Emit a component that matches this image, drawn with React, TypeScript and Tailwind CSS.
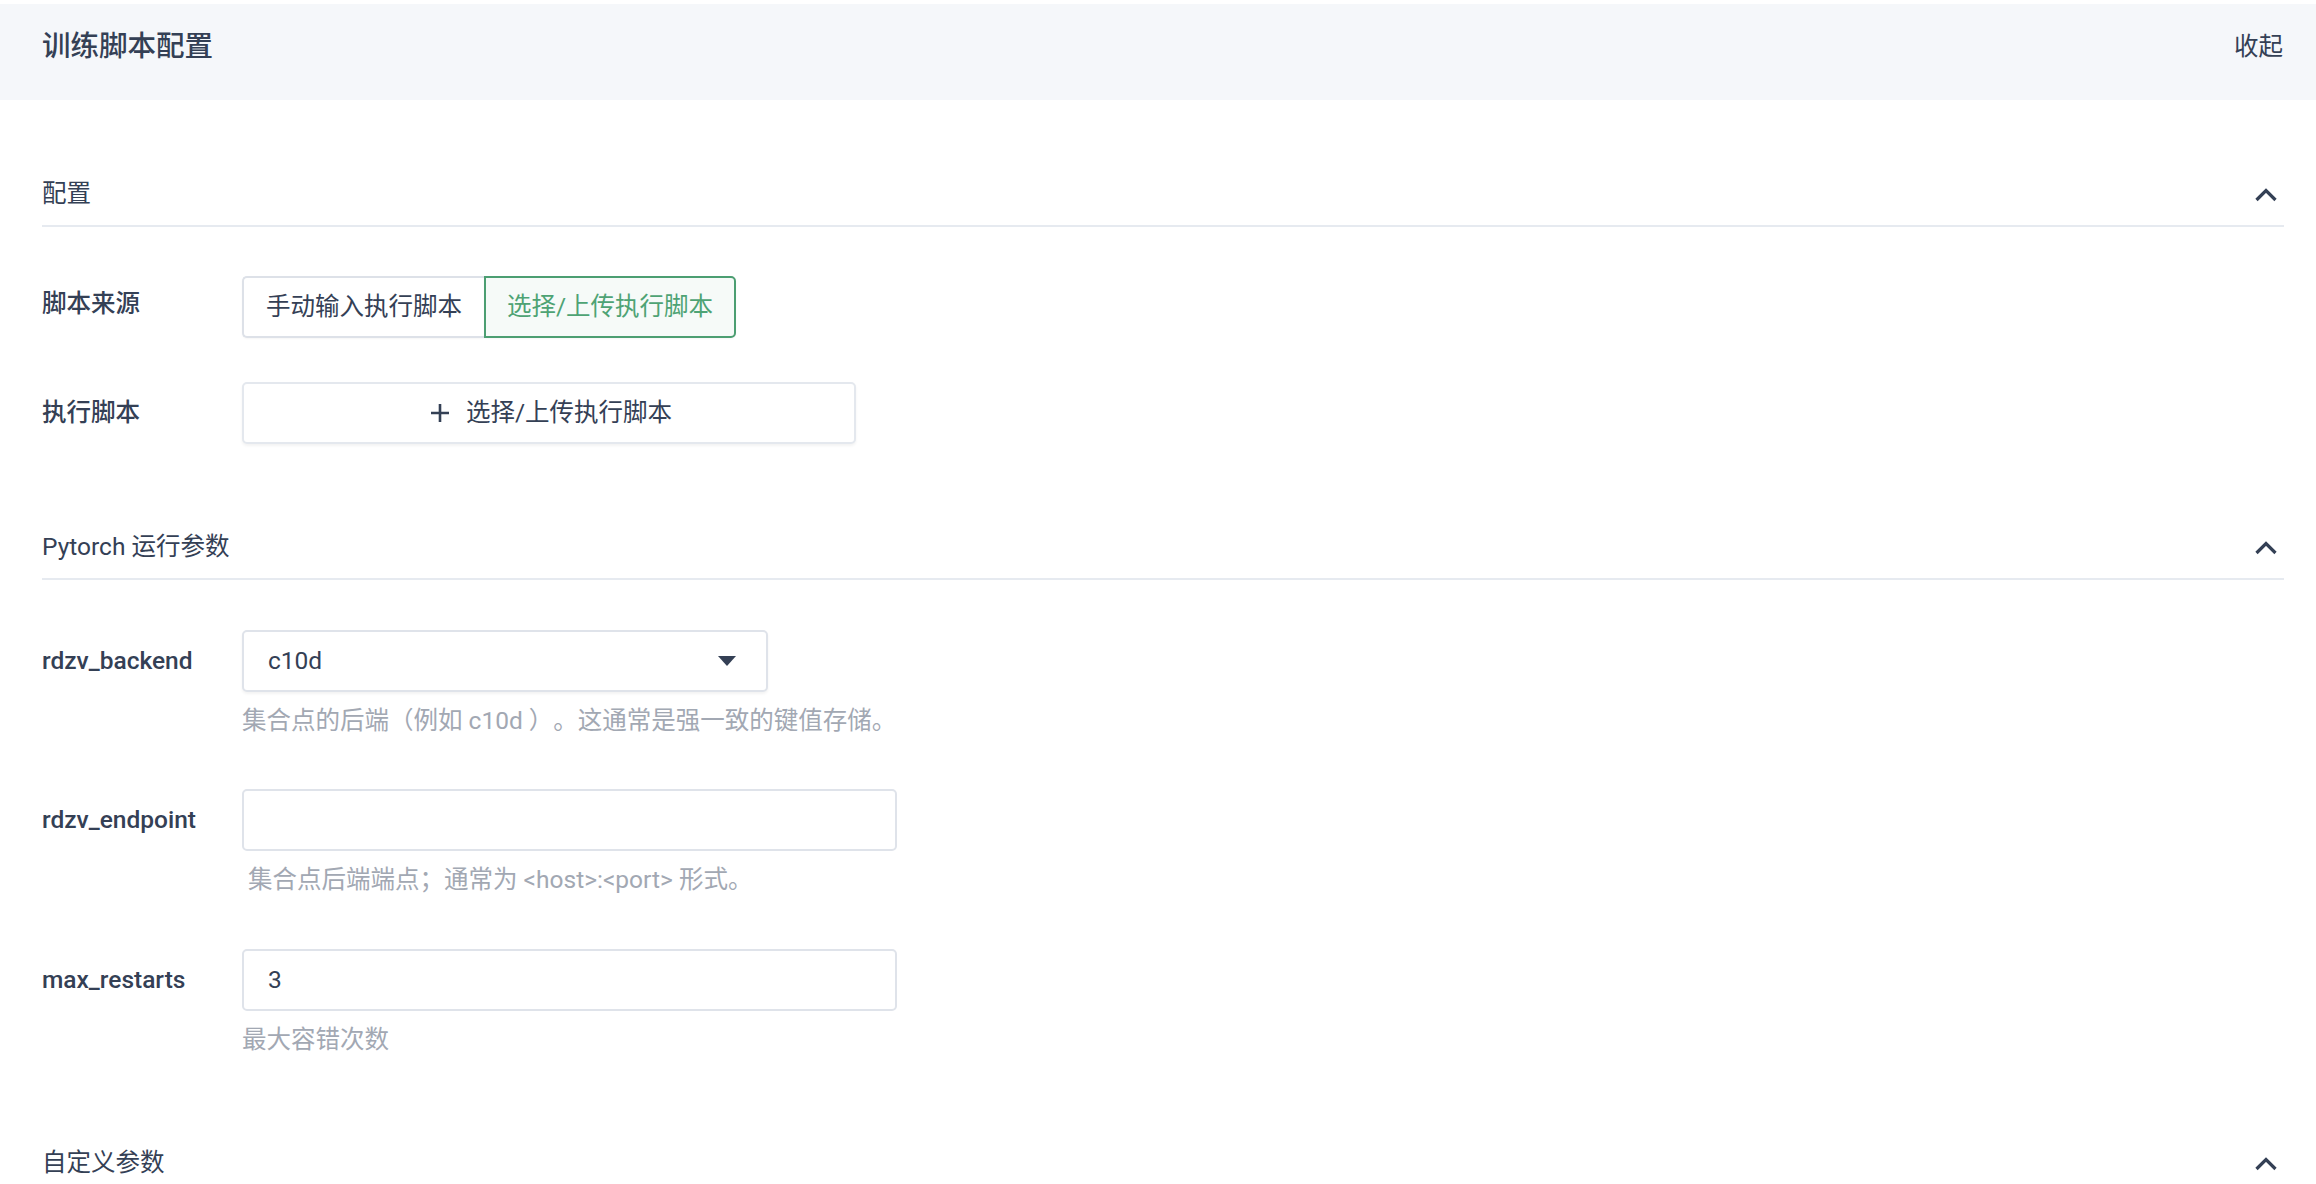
import React from "react";

function Chevron() {
  return (
    <svg width="24" height="15" viewBox="0 0 24 15" className="mr-[6px]" fill="none">
      <path d="M2.5 13 L12 3.5 L21.5 13" stroke="#344055" strokeWidth="3.2" strokeLinejoin="miter" />
    </svg>
  );
}

function SectionHeader({ title, className }: { title: string; className: string }) {
  return (
    <div className={"flex h-[64px] items-center justify-between border-b-2 border-[#e6eaf0] " + className}>
      <span className="text-[24.5px] leading-[36px]">{title}</span>
      <Chevron />
    </div>
  );
}

function Field({
  label,
  children,
  helper,
  className,
  helperIndent,
}: {
  label: string;
  children: React.ReactNode;
  helper?: string;
  className: string;
  helperIndent?: boolean;
}) {
  return (
    <div className={"flex items-start " + className}>
      <div className="flex h-[62px] w-[200px] shrink-0 items-center text-[24.5px] font-medium leading-[36px]">{label}</div>
      <div className="flex flex-col">
        {children}
        {helper ? (
          <div className={"mt-[11px] text-[24.5px] leading-[36px] text-[#a2a8b3] " + (helperIndent ? "pl-[6px]" : "")}>
            {helper}
          </div>
        ) : null}
      </div>
    </div>
  );
}

export default function App() {
  return (
    <div className="min-h-screen bg-white pt-[4px] font-['Roboto','Noto_Sans_CJK_SC',sans-serif] text-[#344055] [text-spacing-trim:space-all]">
      <div className="flex h-[96px] items-start justify-between bg-[#f5f7fa] pl-[42px] pr-[33px] pt-[23px]">
        <h1 className="text-[28.5px] font-medium leading-[40px]">训练脚本配置</h1>
        <span className="text-[24.5px] leading-[40px]">收起</span>
      </div>

      <div className="pl-[42px] pr-[32px]">
        <SectionHeader title="配置" className="mt-[63px]" />

        <div className="mt-[49px] flex items-start">
          <div className="flex h-[62px] w-[200px] shrink-0 items-center pb-[6px] text-[24.5px] font-medium leading-[36px]">
            脚本来源
          </div>
          <div className="flex">
            <div className="flex h-[62px] items-center rounded-l-[5px] border-2 border-r-0 border-[#dde1e8] bg-white px-[22px] text-[24.5px] leading-[36px] shadow-[0_1px_2px_rgba(0,0,0,0.04)]">
              手动输入执行脚本
            </div>
            <div className="flex h-[62px] items-center rounded-r-[5px] border-2 border-[#4c9e72] bg-[#f6faf8] px-[21px] text-[24.5px] leading-[36px] text-[#4ea374] shadow-[0_1px_2px_rgba(0,0,0,0.04)]">
              选择/上传执行脚本
            </div>
          </div>
        </div>

        <Field label="执行脚本" className="mt-[44px]">
          <div className="flex h-[62px] w-[614px] items-center justify-center gap-[16px] rounded-[5px] border-2 border-[#e4e8ee] bg-white pl-[4px] text-[24.5px] leading-[36px] shadow-[0_2px_3px_rgba(0,0,0,0.05)]">
            <svg width="20" height="20" viewBox="0 0 20 20" fill="none">
              <path d="M10 1 V19 M1 10 H19" stroke="#344055" strokeWidth="2.6" />
            </svg>
            <span>选择/上传执行脚本</span>
          </div>
        </Field>

        <SectionHeader title="Pytorch 运行参数" className="mt-[72px]" />

        <Field
          label="rdzv_backend"
          className="mt-[50px]"
          helper="集合点的后端（例如 c10d ）。这通常是强一致的键值存储。"
        >
          <div className="flex h-[62px] w-[526px] items-center justify-between rounded-[5px] border-2 border-[#dfe3ea] bg-white pl-[24px] pr-[30px] text-[24.5px] leading-[36px] shadow-[0_2px_3px_rgba(0,0,0,0.05)]">
            <span>c10d</span>
            <svg width="18" height="10" viewBox="0 0 18 10">
              <path d="M0 0 H18 L9 10 Z" fill="#344055" />
            </svg>
          </div>
        </Field>

        <Field
          label="rdzv_endpoint"
          className="mt-[50px]"
          helper="集合点后端端点；通常为 <host>:<port> 形式。"
          helperIndent
        >
          <div className="h-[62px] w-[655px] rounded-[5px] border-2 border-[#dfe3ea] bg-white" />
        </Field>

        <Field label="max_restarts" className="mt-[51px]" helper="最大容错次数">
          <div className="flex h-[62px] w-[655px] items-center rounded-[5px] border-2 border-[#dfe3ea] bg-white pl-[24px] text-[24.5px] leading-[36px]">
            3
          </div>
        </Field>

        <SectionHeader title="自定义参数" className="mt-[74px]" />
      </div>
    </div>
  );
}
